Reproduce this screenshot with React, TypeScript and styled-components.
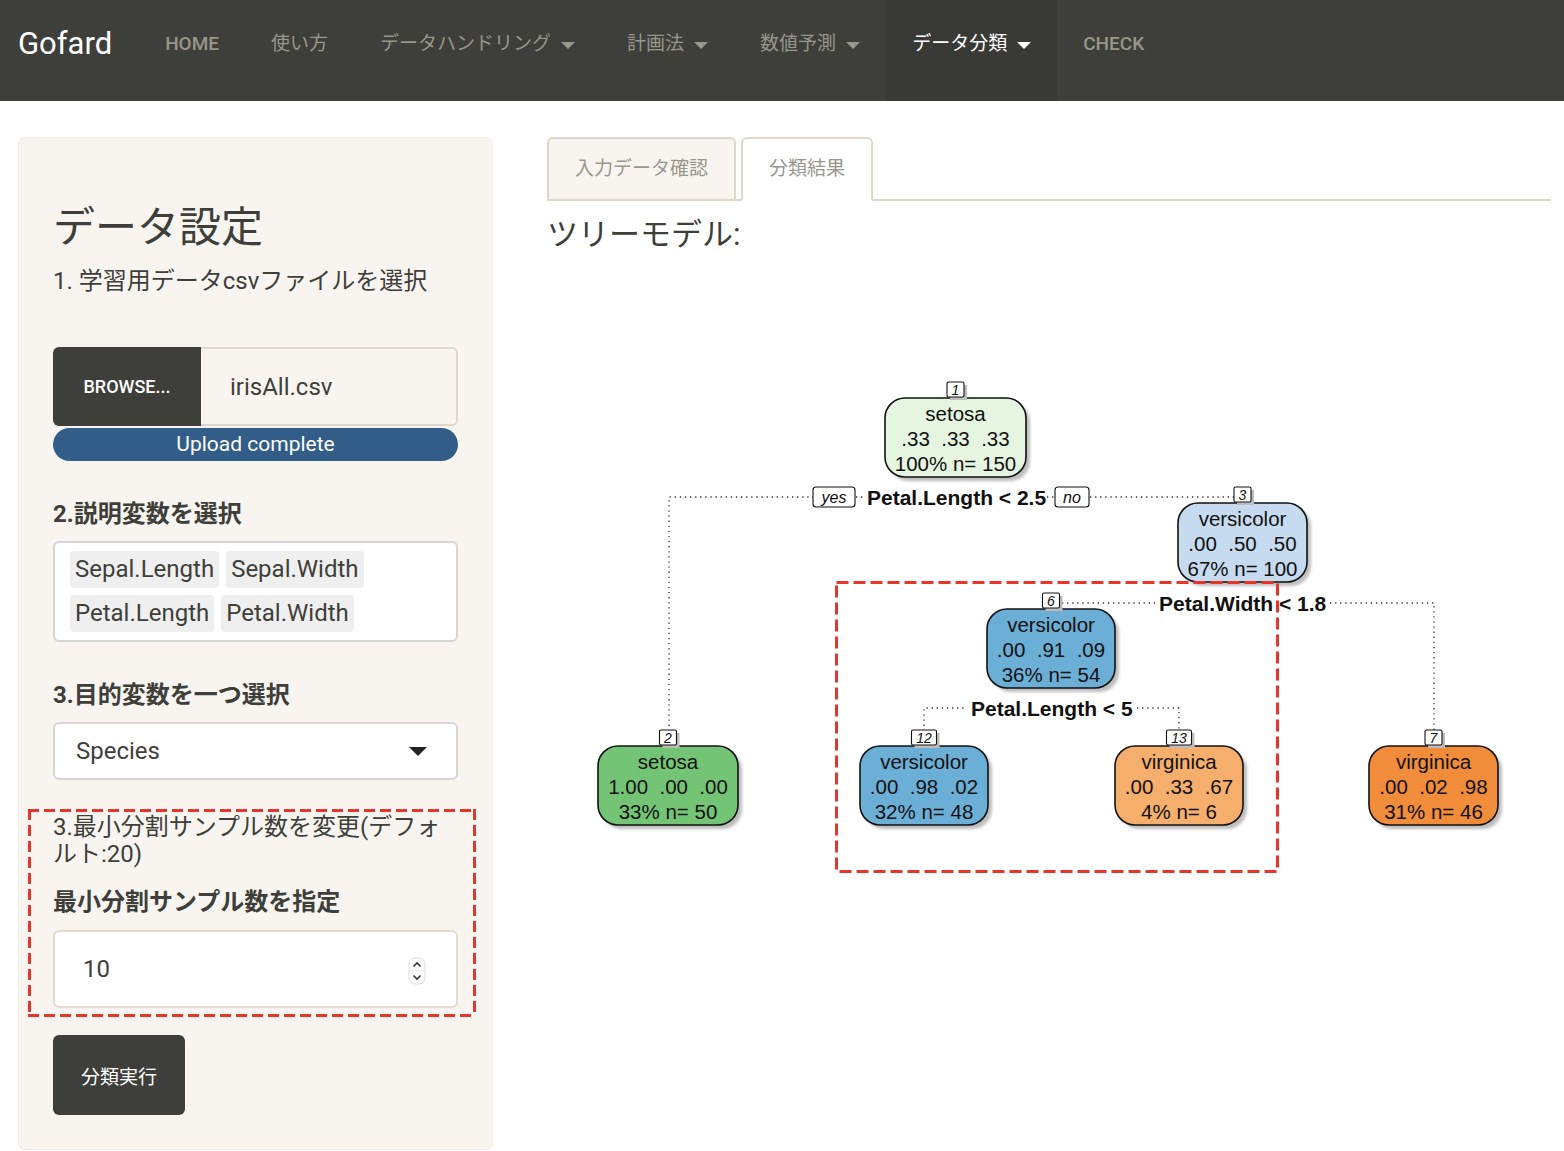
import React from 'react';
import styled, { createGlobalStyle } from 'styled-components';

const GlobalStyle = createGlobalStyle`
  html, body {
    margin: 0;
    padding: 0;
    background: #fff;
  }
  body {
    font-family: Roboto, "Noto Sans CJK JP", sans-serif;
    color: #3e3f3a;
  }
  * { box-sizing: border-box; }
`;

const RED = '#e8352b';

const Navbar = styled.nav`
  display: flex;
  align-items: stretch;
  height: 101px;
  background: #3e3f3a;
`;

const Brand = styled.div`
  padding: 26px 27px 0 18px;
  font-size: 31px;
  line-height: 36px;
  color: #fff;
`;

const NavItem = styled.div<{ $active?: boolean; $latin?: boolean }>`
  display: flex;
  align-items: flex-start;
  padding: 32px 26px 0;
  font-size: 19px;
  line-height: 24px;
  font-weight: ${(p) => (p.$latin ? 500 : 400)};
  color: ${(p) => (p.$active ? '#fff' : '#98978b')};
  background: ${(p) => (p.$active ? '#393a35' : 'transparent')};
`;

const Caret = styled.span`
  display: inline-block;
  margin: 10px 0 0 10px;
  border-top: 7px solid currentColor;
  border-left: 7px solid transparent;
  border-right: 7px solid transparent;
`;

const Content = styled.div`
  display: flex;
  align-items: flex-start;
  padding: 36px 13px 0 18px;
`;

const Sidebar = styled.aside`
  width: 475px;
  flex-shrink: 0;
  background: #f8f5f0;
  border: 1px solid #f1ece4;
  border-radius: 7px;
  padding: 67px 34px 34px;
`;

const Title = styled.h2`
  margin: 0;
  font-size: 42px;
  line-height: 46px;
  font-weight: 400;
`;

const StepText = styled.div`
  margin-top: 14px;
  font-size: 24px;
  line-height: 32px;
`;

const FileRow = styled.div`
  display: flex;
  height: 79px;
  margin-top: 50px;
`;

const BrowseButton = styled.div`
  width: 148px;
  display: flex;
  align-items: center;
  justify-content: center;
  background: #3e3f3a;
  color: #fff;
  font-size: 18px;
  font-weight: 500;
  border-radius: 6px 0 0 6px;
`;

const FileName = styled.div`
  flex: 1;
  display: flex;
  align-items: center;
  padding-left: 29px;
  font-size: 24px;
  background: #f8f5f0;
  border: 2px solid #dfd7ca;
  border-left: none;
  border-radius: 0 6px 6px 0;
`;

const Progress = styled.div`
  margin-top: 2px;
  height: 33px;
  line-height: 33px;
  border-radius: 17px;
  background: #325d88;
  color: #fff;
  font-size: 21px;
  text-align: center;
`;

const FieldLabel = styled.div<{ $gap: number }>`
  margin-top: ${(p) => p.$gap}px;
  margin-bottom: ${(p) => (p.$gap === 37 ? 11 : 12)}px;
  font-size: 24px;
  line-height: 32px;
  font-weight: 700;
`;

const Selectize = styled.div`
  display: flex;
  flex-wrap: wrap;
  gap: 7px;
  padding: 8px 15px;
  background: #fff;
  border: 2px solid #d5d5d5;
  border-radius: 6px;
`;

const Chip = styled.span`
  height: 37px;
  line-height: 37px;
  padding: 0 5px;
  font-size: 24px;
  background: #efefef;
  border-radius: 4px;
`;

const SelectBox = styled.div`
  position: relative;
  height: 58px;
  display: flex;
  align-items: center;
  padding-left: 21px;
  font-size: 24px;
  background: #fff;
  border: 2px solid #d5d5d5;
  border-radius: 6px;
`;

const SelectCaret = styled.span`
  position: absolute;
  right: 29px;
  top: 23px;
  border-top: 9px solid #222;
  border-left: 9px solid transparent;
  border-right: 9px solid transparent;
`;

/* red dashed highlight drawn with gradients so the dashes are long like the screenshot */
const Annotated = styled.div`
  margin: 29px -18px 0 -25px;
  padding: 5px 18px 9px 25px;
  background:
    repeating-linear-gradient(90deg, ${RED} 0 11px, transparent 11px 16px) left top / 100% 3px no-repeat,
    repeating-linear-gradient(90deg, ${RED} 0 11px, transparent 11px 16px) left bottom / 100% 3px no-repeat,
    repeating-linear-gradient(180deg, ${RED} 0 11px, transparent 11px 16px) left top / 3px 100% no-repeat,
    repeating-linear-gradient(180deg, ${RED} 0 11px, transparent 11px 16px) right top / 3px 100% no-repeat;
`;

const HintText = styled.div`
  font-size: 24px;
  line-height: 27px;
`;

const NumberInput = styled.div`
  position: relative;
  height: 78px;
  display: flex;
  align-items: center;
  padding-left: 28px;
  font-size: 24px;
  background: #fff;
  border: 2px solid #e2dbce;
  border-radius: 6px;
`;

const Spinner = styled.svg`
  position: absolute;
  right: 30px;
  top: 25px;
`;

const RunButton = styled.button`
  margin-top: 18px;
  height: 80px;
  padding: 0 28px;
  border: none;
  border-radius: 6px;
  background: #3e3f3a;
  color: #fff;
  font-family: inherit;
  font-size: 19px;
`;

const MainCol = styled.main`
  flex: 1;
  margin-left: 54px;
`;

const Tabs = styled.div`
  display: flex;
  gap: 5px;
  border-bottom: 2px solid #dfd7ca;
`;

const Tab = styled.div<{ $active?: boolean }>`
  height: 64px;
  margin-bottom: -2px;
  display: flex;
  align-items: center;
  padding: 0 26px 5px;
  font-size: 19px;
  color: #98978b;
  background: ${(p) => (p.$active ? '#fff' : '#f8f5f0')};
  border: 2px solid #dfd7ca;
  border-bottom-color: ${(p) => (p.$active ? '#fff' : '#dfd7ca')};
  border-radius: 6px 6px 0 0;
`;

const SectionTitle = styled.h3`
  margin: 14px 0 0;
  font-size: 31px;
  line-height: 40px;
  font-weight: 400;
`;

const TreePlot = styled.svg`
  display: block;
  margin-top: 5px;
  font-family: "Liberation Sans", Arial, sans-serif;
`;

type TreeNode = {
  id: string;
  x: number;
  y: number;
  w: number;
  fill: string;
  lines: string[];
};

const nodes: TreeNode[] = [
  { id: '1', x: 885, y: 398, w: 141, fill: '#e5f5e0', lines: ['setosa', '.33  .33  .33', '100% n= 150'] },
  { id: '3', x: 1178, y: 503, w: 129, fill: '#c6dbef', lines: ['versicolor', '.00  .50  .50', '67% n= 100'] },
  { id: '6', x: 987, y: 609, w: 128, fill: '#6baed6', lines: ['versicolor', '.00  .91  .09', '36% n= 54'] },
  { id: '2', x: 598, y: 746, w: 140, fill: '#74c476', lines: ['setosa', '1.00  .00  .00', '33% n= 50'] },
  { id: '12', x: 860, y: 746, w: 128, fill: '#6baed6', lines: ['versicolor', '.00  .98  .02', '32% n= 48'] },
  { id: '13', x: 1115, y: 746, w: 128, fill: '#f5ae6b', lines: ['virginica', '.00  .33  .67', '4% n= 6'] },
  { id: '7', x: 1369, y: 746, w: 129, fill: '#f08c3a', lines: ['virginica', '.00  .02  .98', '31% n= 46'] },
];

const NODE_H = 79;
const dotted = { stroke: '#333', strokeWidth: 1.3, strokeDasharray: '1.3 3.8', fill: 'none' };

const NodeBox = ({ node }: { node: TreeNode }) => {
  const cx = node.x + node.w / 2;
  const lw = node.id.length > 1 ? 25 : 17;
  return (
    <g>
      <rect x={node.x + 4} y={node.y + 4} width={node.w} height={NODE_H} rx={20} fill="#bdbdbd" filter="url(#soft)" />
      <rect x={node.x} y={node.y} width={node.w} height={NODE_H} rx={20} fill={node.fill} stroke="#111" strokeWidth={1.6} />
      {node.lines.map((line, i) => (
        <text
          key={i}
          x={cx}
          y={node.y + 15 + i * 25}
          textAnchor="middle"
          dominantBaseline="central"
          fontSize={20.5}
          fill="#111"
          style={{ whiteSpace: 'pre' }}
        >
          {line}
        </text>
      ))}
      <rect x={cx - lw / 2 + 3} y={node.y - 13} width={lw} height={15} fill="#bdbdbd" />
      <rect x={cx - lw / 2} y={node.y - 16} width={lw} height={15} fill="#fff" stroke="#111" strokeWidth={1.1} rx={1.5} />
      <text x={cx} y={node.y - 8.5} textAnchor="middle" dominantBaseline="central" fontSize={14} fontStyle="italic" fill="#111">
        {node.id}
      </text>
    </g>
  );
};

const SplitLabel = ({ x, y, children }: { x: number; y: number; children: string }) => (
  <text x={x} y={y} dominantBaseline="central" fontSize={21} fontWeight="bold" fill="#111">
    {children}
  </text>
);

const Tag = ({ x, y, w, label }: { x: number; y: number; w: number; label: string }) => (
  <g>
    <rect x={x} y={y} width={w} height={20} rx={3} fill="#fff" stroke="#111" strokeWidth={1.1} />
    <text x={x + w / 2} y={y + 10} textAnchor="middle" dominantBaseline="central" fontSize={16} fontStyle="italic" fill="#111">
      {label}
    </text>
  </g>
);

const Tree = () => (
  <TreePlot width={1004} height={640} viewBox="547 260 1004 640">
    <defs>
      <filter id="soft" x="-10%" y="-10%" width="130%" height="130%">
        <feGaussianBlur stdDeviation="1.4" />
      </filter>
    </defs>
    <polyline points="669,731 669,497 813,497" {...dotted} />
    <line x1={856} y1={497} x2={864} y2={497} {...dotted} />
    <line x1={1047} y1={497} x2={1055} y2={497} {...dotted} />
    <line x1={1090} y1={497} x2={1235} y2={497} {...dotted} />
    <line x1={1062} y1={603} x2={1155} y2={603} {...dotted} />
    <polyline points="1330,603 1434,603 1434,731" {...dotted} />
    <polyline points="924,731 924,708 966,708" {...dotted} />
    <polyline points="1137,708 1179,708 1179,731" {...dotted} />

    <Tag x={813} y={487} w={42} label="yes" />
    <Tag x={1055} y={487} w={34} label="no" />
    <SplitLabel x={867} y={497}>Petal.Length &lt; 2.5</SplitLabel>
    <SplitLabel x={1159} y={603}>Petal.Width &lt; 1.8</SplitLabel>
    <SplitLabel x={971} y={708}>Petal.Length &lt; 5</SplitLabel>

    {nodes.map((n) => (
      <NodeBox key={n.id} node={n} />
    ))}

    <rect x={836.5} y={582.5} width={441} height={289} fill="none" stroke={RED} strokeWidth={3} strokeDasharray="12 5" />
  </TreePlot>
);

const navItems = [
  { label: 'HOME', latin: true },
  { label: '使い方' },
  { label: 'データハンドリング', menu: true },
  { label: '計画法', menu: true },
  { label: '数値予測', menu: true },
  { label: 'データ分類', menu: true, active: true },
  { label: 'CHECK', latin: true },
];

export default function App() {
  return (
    <>
      <GlobalStyle />
      <Navbar>
        <Brand>Gofard</Brand>
        {navItems.map((item) => (
          <NavItem key={item.label} $active={item.active} $latin={item.latin}>
            {item.label}
            {item.menu && <Caret />}
          </NavItem>
        ))}
      </Navbar>
      <Content>
        <Sidebar>
          <Title>データ設定</Title>
          <StepText>1. 学習用データcsvファイルを選択</StepText>
          <FileRow>
            <BrowseButton>BROWSE...</BrowseButton>
            <FileName>irisAll.csv</FileName>
          </FileRow>
          <Progress>Upload complete</Progress>

          <FieldLabel $gap={37}>2.説明変数を選択</FieldLabel>
          <Selectize>
            {['Sepal.Length', 'Sepal.Width', 'Petal.Length', 'Petal.Width'].map((v) => (
              <Chip key={v}>{v}</Chip>
            ))}
          </Selectize>

          <FieldLabel $gap={37}>3.目的変数を一つ選択</FieldLabel>
          <SelectBox>
            Species
            <SelectCaret />
          </SelectBox>

          <Annotated>
            <HintText>3.最小分割サンプル数を変更(デフォルト:20)</HintText>
            <FieldLabel $gap={18}>最小分割サンプル数を指定</FieldLabel>
            <NumberInput>
              10
              <Spinner width={18} height={28} viewBox="0 0 18 28">
                <rect x={1} y={1} width={16} height={26} rx={6} fill="#fff" stroke="#ddd" />
                <line x1={1.5} y1={14} x2={16.5} y2={14} stroke="#e6e6e6" />
                <polyline points="5.5,9.5 9,6 12.5,9.5" fill="none" stroke="#333" strokeWidth={1.6} />
                <polyline points="5.5,18.5 9,22 12.5,18.5" fill="none" stroke="#333" strokeWidth={1.6} />
              </Spinner>
            </NumberInput>
          </Annotated>

          <RunButton>分類実行</RunButton>
        </Sidebar>

        <MainCol>
          <Tabs>
            <Tab>入力データ確認</Tab>
            <Tab $active>分類結果</Tab>
          </Tabs>
          <SectionTitle>ツリーモデル:</SectionTitle>
          <Tree />
        </MainCol>
      </Content>
    </>
  );
}
